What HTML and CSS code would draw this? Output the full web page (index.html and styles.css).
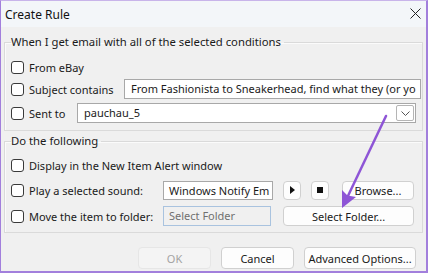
FILE: index.html
```html
<!DOCTYPE html>
<html lang="en">
<head>
  <meta charset="UTF-8">
  <title>Create Rule</title>
  <link rel="stylesheet" href="styles.css">
</head>
<body>
  <div class="window">
    <div class="titlebar">
      <span class="title">Create Rule</span>
      <svg class="close" width="11" height="11" viewBox="0 0 11 11">
        <path d="M0.5 0.5 L10.5 10.5 M10.5 0.5 L0.5 10.5" stroke="#222" stroke-width="1"/>
      </svg>
    </div>

    <div class="dialog">
      <fieldset class="group">
        <legend>When I get email with all of the selected conditions</legend>
        <div class="row">
          <label class="check"><input type="checkbox" class="chk"> From eBay</label>
        </div>
        <div class="row">
          <label class="check w-subject"><input type="checkbox" class="chk"> Subject contains</label>
          <div class="field field-wide">From Fashionista to Sneakerhead, find what they (or yo</div>
        </div>
        <div class="row row-sent">
          <label class="check w-sent"><input type="checkbox" class="chk"> Sent to</label>
          <div class="field combo">
            <span class="combo-text">pauchau_5</span>
            <span class="combo-btn">
              <svg width="9" height="5" viewBox="0 0 9 5"><path d="M0.5 0.5 L4.5 4.5 L8.5 0.5" fill="none" stroke="#555" stroke-width="1"/></svg>
            </span>
          </div>
        </div>
      </fieldset>

      <fieldset class="group group-do">
        <legend>Do the following</legend>
        <div class="row">
          <label class="check"><input type="checkbox" class="chk"> Display in the New Item Alert window</label>
        </div>
        <div class="row row-play">
          <label class="check w-action"><input type="checkbox" class="chk"> Play a selected sound:</label>
          <div class="field field-sound">Windows Notify Em</div>
          <button class="btn btn-icon"><span class="play"></span></button>
          <button class="btn btn-icon"><span class="stop"></span></button>
          <button class="btn btn-browse">Browse...</button>
        </div>
        <div class="row row-move">
          <label class="check w-action"><input type="checkbox" class="chk"> Move the item to folder:</label>
          <div class="field field-folder">Select Folder</div>
          <button class="btn btn-folder">Select Folder...</button>
        </div>
      </fieldset>

      <div class="actions">
        <button class="btn btn-action" disabled>OK</button>
        <button class="btn btn-action btn-cancel">Cancel</button>
        <button class="btn btn-action btn-advanced">Advanced Options...</button>
      </div>
    </div>

    <!-- annotation arrow drawn over the dialog -->
    <svg class="annotation" width="428" height="273" viewBox="0 0 428 273">
      <line x1="386" y1="116" x2="347" y2="198" stroke="#8e55d6" stroke-width="2.5" stroke-linecap="round"/>
      <polygon points="342,208 342,190 347.5,195.5 356,197" fill="#8e55d6"/>
    </svg>
  </div>
</body>
</html>
```

FILE: styles.css
```css
* {
  box-sizing: border-box;
}

body {
  margin: 0;
  font-family: "Noto Sans", "Open Sans", sans-serif;
  font-size: 11px;
  color: #1a1a1a;
}

.window {
  position: relative;
  width: 428px;
  height: 273px;
  background-color: #f0f0f0;
  border-top: 1px solid #c8b4ea;
  border-left: 1px solid #a27fdc;
  border-right: 2px solid #a27fdc;
  border-bottom: 2px solid #a27fdc;
  overflow: hidden;
}

.titlebar {
  height: 26px;
  background-color: #f3f6f9;
  display: flex;
  align-items: center;
  justify-content: space-between;
  padding: 0 5px 0 4px;
}

.title {
  font-size: 12px;
  color: #111;
}

.close {
  display: block;
  margin-top: -2px;
}

.dialog {
  padding: 7px 3px 0 3px;
}

.group {
  margin: 0;
  border: 1px solid #dadada;
  box-shadow: inset 1px 1px 0 #fbfbfb;
  padding: 7px 5px 7px 6px;
  min-width: 0;
}

.group legend {
  padding: 0 3px 0 0;
  margin-left: 0;
  line-height: 16px;
  font-size: 11.3px;
}

.group-do {
  margin-top: 2px;
  padding: 6px 7px 6px 6px;
}

.row {
  display: flex;
  align-items: center;
  height: 20px;
  margin-top: 2px;
}

.row:first-of-type {
  margin-top: 0;
}

.row-sent {
  margin-top: 4px;
}

.row-play {
  margin-top: 5px;
}

.row-move {
  margin-top: 6px;
}

.check {
  display: flex;
  align-items: center;
  gap: 5px;
  white-space: nowrap;
  flex-shrink: 0;
}

.w-subject {
  width: 113px;
}

.w-sent {
  width: 66px;
}

.w-action {
  width: 152px;
}

.chk {
  appearance: none;
  width: 13px;
  height: 13px;
  margin: 0;
  border: 1px solid #3a3a3a;
  border-radius: 3px;
  background-color: #fff;
}

.field {
  height: 20px;
  background-color: #fff;
  border: 1px solid #a8a8a8;
  padding: 0 6px;
  line-height: 18px;
  white-space: nowrap;
  overflow: hidden;
}

.field-wide {
  flex: 1;
  margin-right: -4px;
}

.combo {
  flex: 1;
  display: flex;
  align-items: center;
  justify-content: space-between;
  padding-right: 1px;
  margin-right: 1px;
}

.combo-btn {
  width: 18px;
  height: 16px;
  border: 1px solid #b5b5b5;
  border-radius: 2px;
  display: flex;
  align-items: center;
  justify-content: center;
}

.combo-btn svg {
  display: block;
}

.field-sound {
  width: 110px;
  height: 19px;
  line-height: 17px;
  padding: 0 5px;
}

.field-folder {
  width: 108px;
  background-color: #f0f0f0;
  border-color: #a9c3df;
  color: #707070;
  padding: 0 5px;
}

.btn {
  font-family: inherit;
  font-size: 11px;
  color: #1a1a1a;
  background-color: #fdfdfd;
  border: 1px solid #d0d0d0;
  border-radius: 4px;
  padding: 0;
  height: 19px;
}

.btn-icon {
  width: 18px;
  margin-left: 10px;
  display: flex;
  align-items: center;
  justify-content: center;
}

.btn-icon + .btn-icon {
  margin-left: 10px;
}

.play {
  width: 0;
  height: 0;
  border-top: 4px solid transparent;
  border-bottom: 4px solid transparent;
  border-left: 5px solid #111;
}

.stop {
  width: 6px;
  height: 6px;
  background-color: #111;
}

.btn-browse {
  width: 72px;
  margin-left: 13px;
}

.btn-folder {
  width: 131px;
  height: 20px;
  margin-left: 12px;
}

.actions {
  display: flex;
  justify-content: flex-end;
  gap: 10px;
  margin-top: 14px;
  padding-right: 7px;
}

.btn-action {
  height: 22px;
  width: 73px;
}

.btn-action[disabled] {
  color: #a3a3a3;
  background-color: #f4f4f4;
  border-color: #e6e6e6;
}

.btn-advanced {
  width: 112px;
}

.annotation {
  position: absolute;
  top: -1px;
  left: -1px;
  pointer-events: none;
}
```
